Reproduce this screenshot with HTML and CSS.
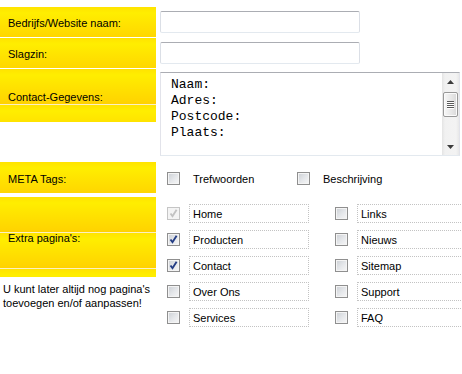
FILE: index.html
```html
<!DOCTYPE html>
<html lang="nl">
<head>
    <meta charset="UTF-8">
    <meta name="viewport" content="width=device-width, initial-scale=1.0">
    <title>Website gegevens</title>
    <link rel="stylesheet" href="styles.css">
</head>
<body>
    <form class="form">
        <div class="row">
            <div class="label">Bedrijfs/Website naam:</div>
            <div class="field"><input type="text" class="text" name="naam"></div>
        </div>
        <div class="row">
            <div class="label">Slagzin:</div>
            <div class="field"><input type="text" class="text" name="slagzin"></div>
        </div>
        <div class="row row-contact">
            <div class="label">Contact-Gegevens:</div>
            <div class="field">
                <div class="contact-box">
                    <textarea class="contact" name="contact">Naam:
Adres:
Postcode:
Plaats:</textarea>
                    <!-- scrollbar in de stijl van het origineel -->
                    <div class="scrollbar">
                        <div class="sb-btn">
                            <svg width="7" height="4" viewBox="0 0 7 4"><path d="M0 4h7L3.5 0z" fill="#3c3c3c"/></svg>
                        </div>
                        <div class="sb-track">
                            <div class="sb-thumb">
                                <svg width="7" height="8" viewBox="0 0 7 8"><path d="M0 0.5h7M0 2.5h7M0 4.5h7M0 6.5h7" stroke="#5a5a5a"/><path d="M0 1.5h7M0 3.5h7M0 5.5h7M0 7.5h7" stroke="#fff"/></svg>
                            </div>
                        </div>
                        <div class="sb-btn">
                            <svg width="7" height="4" viewBox="0 0 7 4"><path d="M0 0h7L3.5 4z" fill="#3c3c3c"/></svg>
                        </div>
                    </div>
                </div>
            </div>
        </div>
        <div class="row row-meta">
            <div class="label">META Tags:</div>
            <div class="field meta">
                <label class="meta-item"><input type="checkbox" class="check" name="trefwoorden">Trefwoorden</label>
                <label class="meta-item"><input type="checkbox" class="check" name="beschrijving">Beschrijving</label>
            </div>
        </div>
        <div class="row row-extra">
            <div class="side">
                <div class="label">Extra pagina's:</div>
                <p class="note">U kunt later altijd nog pagina's toevoegen en/of aanpassen!</p>
            </div>
            <div class="field pages">
                <label class="page"><input type="checkbox" class="check" checked disabled><span class="page-name">Home</span></label>
                <label class="page"><input type="checkbox" class="check" checked><span class="page-name">Producten</span></label>
                <label class="page"><input type="checkbox" class="check" checked><span class="page-name">Contact</span></label>
                <label class="page"><input type="checkbox" class="check"><span class="page-name">Over Ons</span></label>
                <label class="page"><input type="checkbox" class="check"><span class="page-name">Services</span></label>
                <label class="page"><input type="checkbox" class="check"><span class="page-name">Links</span></label>
                <label class="page"><input type="checkbox" class="check"><span class="page-name">Nieuws</span></label>
                <label class="page"><input type="checkbox" class="check"><span class="page-name">Sitemap</span></label>
                <label class="page"><input type="checkbox" class="check"><span class="page-name">Support</span></label>
                <label class="page"><input type="checkbox" class="check"><span class="page-name">FAQ</span></label>
            </div>
        </div>
    </form>
</body>
</html>
```

FILE: styles.css
```css
html, body {
    overflow: hidden;
}
body {
    margin: 0;
    font-family: "Liberation Sans", Arial, sans-serif;
    font-size: 11px;
    color: #000;
    background-color: #fff;
}
.form {
    padding-top: 7px;
}
.row {
    display: grid;
    grid-template-columns: 156px 1fr;
    column-gap: 4px;
    margin-bottom: 1px;
}
.label {
    display: flex;
    align-items: center;
    height: 30px;
    box-sizing: border-box;
    padding: 2px 0 0 8px;
    background-image: linear-gradient(to bottom, #ffe300 0, #ffee00 6px, #ffe400 16px, #ffd400 33px, #ffd000 35px, #faf0c4 35px, #faf0c4 36px);
    background-size: 100% 36px;
    background-repeat: repeat-y;
}
.field {
    display: flex;
    align-items: center;
}
.text {
    width: 200px;
    height: 22px;
    box-sizing: border-box;
    margin: 0;
    padding: 2px 3px;
    border: 1px solid;
    border-color: #abadb3 #dbdfe6 #e3e9ef #dbdfe6;
    border-radius: 2px;
    font-family: "Liberation Sans", Arial, sans-serif;
    font-size: 11px;
}
.row-contact {
    margin-bottom: 6px;
}
.row-contact .label {
    height: 53px;
    align-self: start;
}
.row-contact .field {
    align-items: flex-start;
    padding-top: 3px;
}
.contact-box {
    display: flex;
    width: 300px;
    height: 84px;
    box-sizing: border-box;
    border: 1px solid;
    border-color: #abadb3 #e2e3ea #e3e9ef #e2e3ea;
}
.contact {
    flex: 1;
    margin: 0;
    padding: 4px 10px 0;
    border: 0;
    outline: none;
    font-family: "Liberation Mono", "Courier New", monospace;
    font-size: 13px;
    line-height: 16px;
    color: #000;
    resize: none;
    overflow: hidden;
}
.scrollbar {
    display: flex;
    flex-direction: column;
    width: 17px;
    background: linear-gradient(to right, #e4e4e4, #f1f1f1 3px, #f3f3f3 14px, #e8e8e8);
}
.sb-btn {
    display: flex;
    align-items: center;
    justify-content: center;
    height: 17px;
}
.sb-track {
    flex: 1;
    padding: 2px 1px 0;
}
.sb-thumb {
    display: flex;
    align-items: center;
    justify-content: center;
    height: 25px;
    box-sizing: border-box;
    border: 1px solid #989898;
    border-radius: 2px;
    background: linear-gradient(to right, #f7f7f7, #e6e6e6 60%, #d9d9d9);
    box-shadow: inset 0 0 0 1px #fbfbfb;
}
.row-meta {
    margin-bottom: 4px;
}
.row-meta .label {
    height: 31px;
}
.meta {
    padding-left: 7px;
}
.meta-item {
    display: flex;
    align-items: center;
    gap: 13px;
    width: 130px;
    padding-top: 2px;
}
.check {
    appearance: none;
    -webkit-appearance: none;
    flex: none;
    width: 13px;
    height: 13px;
    margin: 0;
    border: 1px solid #8f8f8f;
    box-shadow: inset 0 0 0 1px #f4f4f4;
    background-color: #e6e8ea;
    background-image: linear-gradient(135deg, #cbcfd4 0%, #e6e8eb 55%, #f7f7f7 100%);
}
.check:checked {
    background-image: url("data:image/svg+xml,%3Csvg xmlns='http://www.w3.org/2000/svg' width='11' height='11'%3E%3Cpath d='M2.5 5.5L4.5 8.2L8.6 1.8' fill='none' stroke='%23233c84' stroke-width='1.9'/%3E%3C/svg%3E"), linear-gradient(135deg, #cbcfd4 0%, #e6e8eb 55%, #f7f7f7 100%);
}
.check:disabled {
    border-color: #c5c5c5;
    background-image: none;
    background-color: #f4f4f4;
}
.check:disabled:checked {
    background-image: url("data:image/svg+xml,%3Csvg xmlns='http://www.w3.org/2000/svg' width='11' height='11'%3E%3Cpath d='M2.5 5.5L4.5 8.2L8.6 1.8' fill='none' stroke='%23c2c2c2' stroke-width='1.9'/%3E%3C/svg%3E");
}
.row-extra .label {
    height: 80px;
}
.note {
    margin: 5px 0 0;
    padding-left: 3px;
    line-height: 14px;
}
.pages {
    display: grid;
    grid-template-columns: 142px 142px;
    grid-template-rows: repeat(5, 19px);
    grid-auto-flow: column;
    column-gap: 26px;
    row-gap: 7px;
    align-items: start;
    align-content: start;
    padding: 7px 0 0 7px;
}
.page {
    display: flex;
    align-items: center;
    gap: 9px;
}
.page-name {
    width: 120px;
    height: 19px;
    box-sizing: border-box;
    padding: 2px 0 0 3px;
    border: 1px dotted #c3c3c3;
    line-height: 15px;
}
```
